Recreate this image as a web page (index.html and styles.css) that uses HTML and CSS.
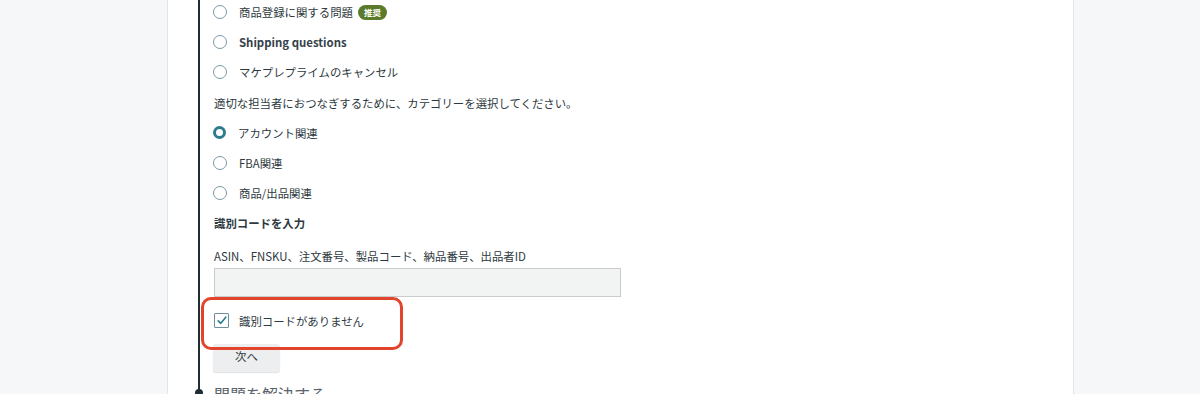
FILE: index.html
```html
<!DOCTYPE html>
<html lang="ja">
<head>
<meta charset="utf-8">
<link rel="stylesheet" href="styles.css">
</head>
<body>
<div class="page">
  <div class="card">
    <div class="step">
      <div class="rail"><span class="dot"></span></div>
      <div class="content">
        <div class="row"><span class="radio"></span><span class="label">商品登録に関する問題</span><span class="badge">推奨</span></div>
        <div class="row"><span class="radio"></span><span class="label latin">Shipping questions</span></div>
        <div class="row"><span class="radio"></span><span class="label">マケプレプライムのキャンセル</span></div>
        <div class="row text">適切な担当者におつなぎするために、カテゴリーを選択してください。</div>
        <div class="row"><span class="radio checked"></span><span class="label">アカウント関連</span></div>
        <div class="row"><span class="radio"></span><span class="label">FBA関連</span></div>
        <div class="row"><span class="radio"></span><span class="label">商品/出品関連</span></div>
        <div class="row heading">識別コードを入力</div>
        <div class="field-label">ASIN、FNSKU、注文番号、製品コード、納品番号、出品者ID</div>
        <div class="input"></div>
        <div class="check-row">
          <span class="checkbox"><svg width="10" height="9" viewBox="0 0 10 9"><path d="M1.2 4.8 L3.8 7.3 L8.8 1.2" fill="none" stroke="#2a7d8f" stroke-width="1.6" stroke-linecap="round" stroke-linejoin="round"/></svg></span>
          <span class="label">識別コードがありません</span>
        </div>
        <div class="btn">次へ</div>
        <div class="next-title">問題を解決する</div>
        <div class="highlight"></div>
      </div>
    </div>
  </div>
</div>
</body>
</html>
```
FILE: styles.css
```css
html, body {
  margin: 0;
  padding: 0;
  background: #f6f7f8;
  height: 394px;
  overflow: hidden;
}
body {
  font-family: "Noto Sans CJK JP", "Noto Sans", sans-serif;
  color: #2d3940;
  font-size: 11.4px;
}
.page {
  display: flex;
  height: 394px;
}
.card {
  margin-left: 167px;
  width: 905px;
  background: #ffffff;
  border-left: 1px solid #e3e5e7;
  border-right: 1px solid #e3e5e7;
  height: 394px;
}
.step {
  margin-left: 30px;
  display: flex;
  align-items: flex-start;
  height: 394px;
}
.rail {
  width: 2px;
  height: 393px;
  background: #1f2d35;
  flex: none;
  position: relative;
}
.dot {
  position: absolute;
  left: -3px;
  top: 389px;
  width: 8px;
  height: 8px;
  background: #1f2d35;
  border-radius: 50%;
}
.content {
  margin-top: -3px;
  padding-left: 14px;
  position: relative;
  display: flex;
  flex-direction: column;
}
.content > * { flex: none; }
.row {
  height: 30.2px;
  display: flex;
  align-items: center;
}
.radio {
  width: 12px;
  height: 12px;
  border: 1px solid #7a98a3;
  border-radius: 50%;
  margin-left: -1px;
  margin-right: 12px;
  flex: none;
}
.radio.checked {
  width: 7px;
  height: 7px;
  border: 3px solid #2e7b8c;
}
.label { white-space: nowrap; }
.latin { font-weight: 700; color: #34424a; }
.badge {
  margin-left: 5px;
  background: #5b7a2a;
  color: #fff;
  font-size: 8.5px;
  font-weight: 700;
  height: 15px;
  line-height: 15px;
  padding: 0 6px;
  border-radius: 8px;
}
.heading { font-weight: 700; }
.field-label {
  margin-top: 8px;
  height: 18px;
  line-height: 18px;
}
.input {
  margin-top: 3px;
  width: 405px;
  height: 27px;
  background: #f2f3f3;
  border: 1px solid #c9cbcc;
}
.check-row {
  margin-top: 16px;
  height: 16px;
  display: flex;
  align-items: center;
}
.checkbox {
  width: 13px;
  height: 13px;
  border: 1px solid #6f8f9b;
  border-radius: 1px;
  margin-right: 10px;
  display: flex;
  align-items: center;
  justify-content: center;
  flex: none;
}
.btn {
  margin-top: 15px;
  margin-left: -1px;
  width: 67px;
  height: 28px;
  background: #eceeef;
  border-radius: 3px;
  box-shadow: 0 1px 1px rgba(0,0,0,0.12);
  display: flex;
  align-items: center;
  justify-content: center;
  padding-bottom: 3px;
  box-sizing: border-box;
}
.next-title {
  margin-top: 10px;
  font-size: 16px;
  color: #5a646a;
  white-space: nowrap;
}
.highlight {
  position: absolute;
  left: 1px;
  top: 300px;
  width: 196px;
  height: 47px;
  border: 3px solid #e2452b;
  border-radius: 10px;
}
```
